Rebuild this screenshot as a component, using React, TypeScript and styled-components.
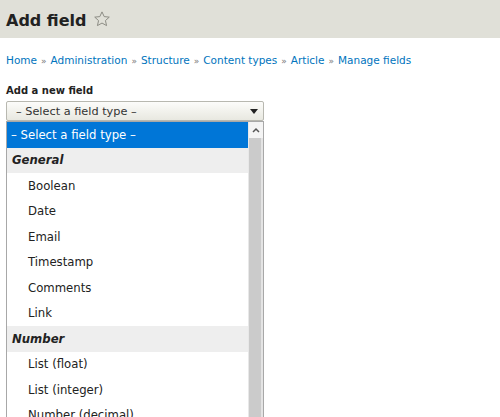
import styled, { createGlobalStyle } from "styled-components";

const GlobalStyle = createGlobalStyle`
  html, body {
    margin: 0;
    padding: 0;
    background: #fff;
    font-family: "DejaVu Sans", "Liberation Sans", sans-serif;
    color: #222;
  }
`;

const groups = [
  { label: "General", items: ["Boolean", "Date", "Email", "Timestamp", "Comments", "Link"] },
  { label: "Number", items: ["List (float)", "List (integer)", "Number (decimal)", "Number (float)"] },
];

const crumbs = ["Home", "Administration", "Structure", "Content types", "Article", "Manage fields"];

const Header = styled.header`
  background: #e0e0d8;
  height: 38px;
  padding: 0 6px;
  display: flex;
  align-items: center;
  gap: 6px;
`;

const Title = styled.h1`
  margin: 0;
  font-size: 16px;
  font-weight: bold;
  color: #222;
  padding-top: 2px;
`;

const Star = () => (
  <svg width="18" height="18" viewBox="0 0 24 24">
    <path
      d="M12 2.5l2.9 6.3 6.8.7-5.1 4.6 1.5 6.7L12 17.4l-6.1 3.4 1.5-6.7-5.1-4.6 6.8-.7z"
      fill="none"
      stroke="#8a8a82"
      strokeWidth="1.3"
      strokeLinejoin="round"
    />
  </svg>
);

const Main = styled.main`
  padding: 0 6px;
`;

const Breadcrumb = styled.nav`
  margin-top: 15px;
  font-size: 10.5px;
  line-height: 14px;
  color: #777;
  a {
    color: #0074bd;
    text-decoration: none;
  }
  span.sep {
    font-size: 9px;
    margin: 0 4px;
  }
`;

const Label = styled.div`
  margin-top: 16px;
  font-size: 10px;
  font-weight: bold;
  line-height: 13px;
`;

const SelectWrap = styled.div`
  width: 258px;
  margin-top: 4px;
`;

const SelectBox = styled.div`
  height: 20px;
  box-sizing: border-box;
  border: 1px solid #b8b8b0;
  border-radius: 2px;
  background: linear-gradient(#fcfcfa, #e8e8e0);
  display: flex;
  align-items: center;
  justify-content: space-between;
  padding: 0 5px 0 9px;
  font-size: 11.3px;
  color: #333;
`;

const Caret = styled.span`
  width: 0;
  height: 0;
  border-left: 4px solid transparent;
  border-right: 4px solid transparent;
  border-top: 5px solid #222;
`;

const Popup = styled.div`
  width: 258px;
  height: 300px;
  box-sizing: border-box;
  border: 1px solid #a8a8a8;
  border-bottom: none;
  background: #fff;
  display: flex;
`;

const List = styled.div`
  flex: 1;
  overflow: hidden;
`;

const Row = styled.div<{ $kind: "selected" | "group" | "item" }>`
  height: 25.5px;
  display: flex;
  align-items: center;
  font-size: 11.7px;
  white-space: nowrap;
  padding-left: ${(p) => (p.$kind === "item" ? "21px" : p.$kind === "group" ? "5px" : "4px")};
  background: ${(p) => (p.$kind === "selected" ? "#0076d7" : p.$kind === "group" ? "#eeeeee" : "transparent")};
  color: ${(p) => (p.$kind === "selected" ? "#fff" : "#222")};
  font-weight: ${(p) => (p.$kind === "group" ? "bold" : "normal")};
  font-style: ${(p) => (p.$kind === "group" ? "italic" : "normal")};
`;

const Scrollbar = styled.div`
  width: 14px;
  display: flex;
  flex-direction: column;
  border-left: 1px solid #e8e8e8;
`;

const ScrollUp = styled.div`
  height: 16px;
  background: #f4f4f4;
  display: flex;
  align-items: center;
  justify-content: center;
`;

const Track = styled.div`
  flex: 1;
  background: #cbcbcb;
  border-right: 2px solid #e4e4e4;
`;

export default function App() {
  return (
    <>
      <GlobalStyle />
      <Header>
        <Title>Add field</Title>
        <Star />
      </Header>
      <Main>
        <Breadcrumb>
          {crumbs.map((c, i) => (
            <span key={c}>
              <a href="#">{c}</a>
              {i < crumbs.length - 1 && <span className="sep">»</span>}
            </span>
          ))}
        </Breadcrumb>
        <Label>Add a new field</Label>
        <SelectWrap>
          <SelectBox>
            <span>– Select a field type –</span>
            <Caret />
          </SelectBox>
          <Popup>
            <List>
              <Row $kind="selected">– Select a field type –</Row>
              {groups.map((g) => (
                <div key={g.label}>
                  <Row $kind="group">{g.label}</Row>
                  {g.items.map((it) => (
                    <Row key={it} $kind="item">
                      {it}
                    </Row>
                  ))}
                </div>
              ))}
            </List>
            <Scrollbar>
              <ScrollUp>
                <svg width="8" height="6" viewBox="0 0 8 6">
                  <path d="M1 5L4 2l3 3" fill="none" stroke="#555" strokeWidth="1.5" />
                </svg>
              </ScrollUp>
              <Track />
            </Scrollbar>
          </Popup>
        </SelectWrap>
      </Main>
    </>
  );
}
